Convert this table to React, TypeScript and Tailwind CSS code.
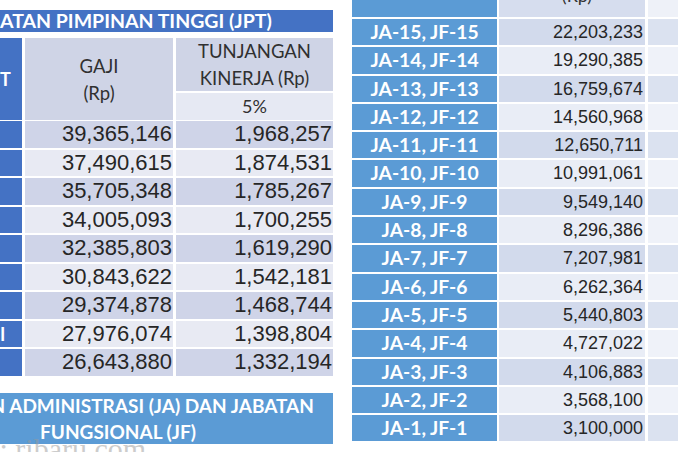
import React from "react";

const leftRows: [string, string][] = [
  ["39,365,146", "1,968,257"],
  ["37,490,615", "1,874,531"],
  ["35,705,348", "1,785,267"],
  ["34,005,093", "1,700,255"],
  ["32,385,803", "1,619,290"],
  ["30,843,622", "1,542,181"],
  ["29,374,878", "1,468,744"],
  ["27,976,074", "1,398,804"],
  ["26,643,880", "1,332,194"],
];

const rightRows: [string, string][] = [
  ["JA-15, JF-15", "22,203,233"],
  ["JA-14, JF-14", "19,290,385"],
  ["JA-13, JF-13", "16,759,674"],
  ["JA-12, JF-12", "14,560,968"],
  ["JA-11, JF-11", "12,650,711"],
  ["JA-10, JF-10", "10,991,061"],
  ["JA-9, JF-9", "9,549,140"],
  ["JA-8, JF-8", "8,296,386"],
  ["JA-7, JF-7", "7,207,981"],
  ["JA-6, JF-6", "6,262,364"],
  ["JA-5, JF-5", "5,440,803"],
  ["JA-4, JF-4", "4,727,022"],
  ["JA-3, JF-3", "4,106,883"],
  ["JA-2, JF-2", "3,568,100"],
  ["JA-1, JF-1", "3,100,000"],
];

const cal = "font-['Lato','Open_Sans',sans-serif]";
const ari = "font-['Liberation_Sans',Arial,sans-serif]";

export default function App() {
  return (
    <div className="relative w-[678px] h-[452px] overflow-hidden bg-white flex">
      {/* LEFT PANEL */}
      <div className="w-[333px] shrink-0 flex flex-col pt-[10px]">
        <div
          className={`h-[22px] bg-[#4472c4] text-white font-bold text-[19.5px] leading-[22px] whitespace-nowrap overflow-hidden ${cal}`}
        >
          ATAN PIMPINAN TINGGI (JPT)
        </div>
        <div className="mt-[6px] h-[80px] grid grid-cols-[22px_148px_157px] gap-x-[3px]">
          <div
            className={`bg-[#4472c4] text-white font-bold text-[18px] flex items-center ${cal}`}
          >
            T
          </div>
          <div
            className={`bg-[#cfd4e6] text-[#303030] text-[18.5px] leading-[27px] flex flex-col items-center justify-center pt-[1px] ${cal}`}
          >
            <span>GAJI</span>
            <span>(Rp)</span>
          </div>
          <div className="flex flex-col gap-y-[2px]">
            <div
              className={`h-[53px] bg-[#cfd4e6] text-[#303030] text-[18.5px] leading-[27px] flex flex-col items-center justify-center ${cal}`}
            >
              <span>TUNJANGAN</span>
              <span>KINERJA (Rp)</span>
            </div>
            <div
              className={`flex-1 bg-[#e6e9f3] text-[#303030] text-[18px] flex items-center justify-center ${cal}`}
            >
              5%
            </div>
          </div>
        </div>
        <div className="mt-[3px] flex flex-col gap-y-[2px]">
          {leftRows.map(([g, t], i) => {
            const bg = i % 2 === 0 ? "bg-[#cfd4e8]" : "bg-[#e8eaf3]";
            return (
              <div key={i} className="h-[26.5px] grid grid-cols-[22px_148px_157px] gap-x-[3px]">
                <div
                  className={`bg-[#4472c4] text-white font-bold text-[18px] leading-[26px] ${cal}`}
                >
                  {i === 7 ? "I" : ""}
                </div>
                <div
                  className={`${bg} text-[#262626] text-[22px] leading-[26px] text-right pr-[1px] ${ari}`}
                >
                  {g}
                </div>
                <div
                  className={`${bg} text-[#262626] text-[22px] leading-[26px] text-right pr-[1px] ${ari}`}
                >
                  {t}
                </div>
              </div>
            );
          })}
        </div>
        <div className="mt-[17px] h-[51px] bg-[#5b9bd5] overflow-hidden">
          <div
            className={`ml-[-97px] w-[430px] flex flex-col items-center text-white font-bold text-[19px] leading-[26px] whitespace-nowrap ${cal}`}
          >
            <span>JABATAN ADMINISTRASI (JA) DAN JABATAN</span>
            <span>FUNGSIONAL (JF)</span>
          </div>
        </div>
      </div>

      {/* GAP */}
      <div className="w-[19px] shrink-0" />

      {/* RIGHT PANEL */}
      <div className="flex-1 flex flex-col">
        <div className="h-[17px] grid grid-cols-[145px_146px_1fr] gap-x-[2px]">
          <div className="bg-[#5b9bd5]" />
          <div className="bg-[#d6ddee] overflow-hidden flex justify-center">
            <span className={`text-[18px] leading-[20px] mt-[-15px] pl-[10px] text-[#333] ${cal}`}>(Rp)</span>
          </div>
          <div className="bg-[#eef1f8] ml-[1px]" />
        </div>
        <div className="mt-[2px] flex flex-col gap-y-[2px]">
          {rightRows.map(([l, v], i) => {
            const bg = i % 2 === 0 ? "bg-[#d2daec]" : "bg-[#e9edf6]";
            const bg3 = i % 2 === 0 ? "bg-[#dbe2f0]" : "bg-[#eff2f9]";
            return (
              <div key={i} className="h-[26.3px] grid grid-cols-[145px_146px_1fr] gap-x-[2px]">
                <div
                  className={`bg-[#5b9bd5] text-white font-bold text-[19.3px] leading-[26px] text-center ${cal}`}
                >
                  {l}
                </div>
                <div
                  className={`${bg} text-[#262626] text-[18px] leading-[26px] text-right pr-[2px] ${ari}`}
                >
                  {v}
                </div>
                <div className={`${bg3} ml-[1px]`} />
              </div>
            );
          })}
        </div>
      </div>

      {/* watermark */}
      <div
        className="absolute left-[-8px] top-[434px] text-[30px] leading-[30px] text-[#9a9a9a] opacity-50 font-['Liberation_Serif',serif] whitespace-nowrap pointer-events-none"
      >
        .:.ribaru.com
      </div>
    </div>
  );
}
